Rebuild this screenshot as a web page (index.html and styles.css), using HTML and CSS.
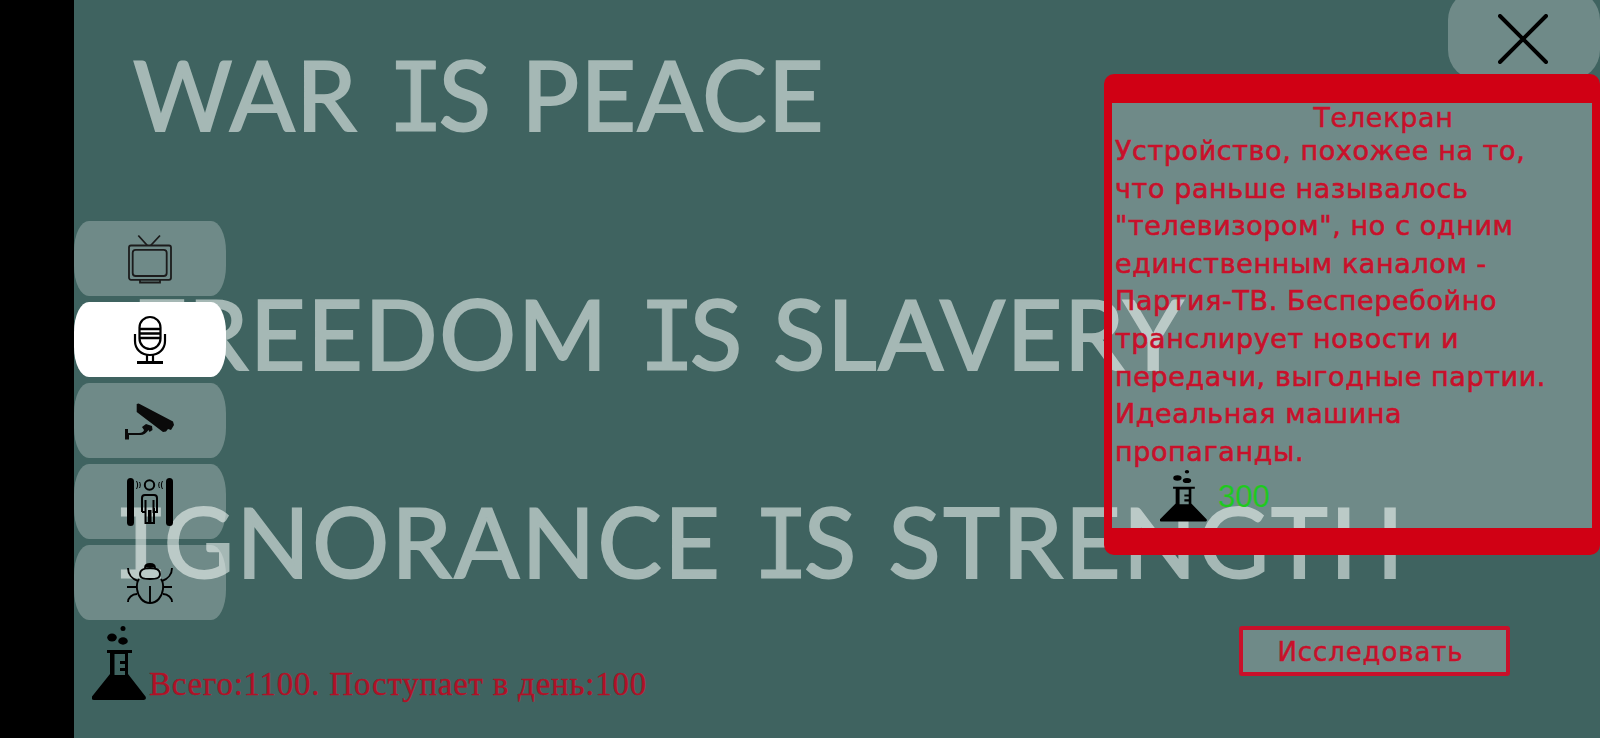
FILE: index.html
```html
<!DOCTYPE html>
<html lang="ru">
<head>
<meta charset="utf-8">
<title>Телекран</title>
<link rel="stylesheet" href="styles.css">
</head>
<body>
<div class="app">
  <div class="bar"></div>
  <main class="main">
    <div class="slogans">
      <h1 class="slogan slogan-war">WAR <span class="i">I</span>S PEACE</h1>
      <h1 class="slogan slogan-freedom">FREEDOM <span class="i">I</span>S SLAVERY</h1>
      <h1 class="slogan slogan-ignorance"><span class="i">I</span>GNORANCE <span class="i">I</span>S STRENGTH</h1>
    </div>
    <footer class="footer">
      <div class="status">
        <svg class="flask flask-big" viewBox="0 0 54 76"><use href="#flask"/></svg>
        <span class="status-text">Всего:1100. Поступает в день:100</span>
      </div>
      <button class="research">Исследовать</button>
    </footer>

    <nav class="nav">
      <button class="nav-btn">
        <svg class="nav-icon" viewBox="0 0 48 48" fill="none" stroke="#1c1c1c" stroke-width="1.8">
          <path d="M12.3.5l9 10M34 .5l-9.300 10"/>
          <rect x="3" y="10.500" width="42" height="34.300" rx="2"/>
          <rect x="6.700" y="14.800" width="34" height="26.200" rx="3"/>
          <path d="M14 45v2.500h20V45"/>
        </svg>
      </button>
      <button class="nav-btn is-active">
        <svg class="nav-icon" viewBox="0 0 48 48" fill="none" stroke="#000" stroke-width="2.200">
          <rect x="13.500" y="1" width="21" height="32" rx="10.500"/>
          <path d="M14 13h20M14 17.500h20M14 22h20" stroke-width="2.500"/>
          <path d="M9 18v7c0 8 6 14 15 14s15-6 15-14v-7"/>
          <path d="M21 39v7M27 39v7"/>
          <path d="M11 46.500h26" stroke-width="3"/>
        </svg>
      </button>
      <button class="nav-btn">
        <svg class="nav-icon" viewBox="0 0 48 48" fill="#0a0a0a">
          <path d="M10.700 7l2-.5L47 24.500l1 3.500-3 5-3-1-2 2.500-3 .5L10.700 15z"/>
          <path d="M20 27l6 2 .5 4-3 2-1-2c-2 3-5 5-8 5H3v4.500H-1V32h3v4h11c3 0 5-2 5-3l-2-3z"/>
        </svg>
      </button>
      <button class="nav-btn">
        <svg class="nav-icon" viewBox="0 0 48 48" fill="none" stroke="#000" stroke-width="2">
          <rect x="1" y="0" width="7" height="48" rx="3.500" fill="#000" stroke="none"/>
          <rect x="40" y="0" width="7" height="48" rx="3.500" fill="#000" stroke="none"/>
          <circle cx="23.500" cy="7" r="4.700"/>
          <path d="M16 34V20a3 3 0 0 1 3-3h9a3 3 0 0 1 3 3v14h-3.500V22M19.500 22v12H16M19.500 30v15h3.500V33h1.500v12H28V30"/>
          <path d="M10.500 3c1.500 2.500 1.500 5.500 0 8M13.500 4c1 1.500 1 4.500 0 6M36.500 3c-1.500 2.500-1.500 5.500 0 8M33.500 4c-1 1.500-1 4.500 0 6" stroke-width="1"/>
        </svg>
      </button>
      <button class="nav-btn">
        <svg class="nav-icon" viewBox="0 0 48 48" fill="none" stroke="#000" stroke-width="1.900">
          <path d="M14 15c0-4 4-6 10-6s10 2 10 6-3 5-10 5-10-1-10-5z"/>
          <path d="M19 9c0-3 2-4 5-4s5 1 5 4M19 7h10"/>
          <path d="M13 20c-2 3-2.500 6-2 10 1 8 6 14 13 14s12-6 13-14c.5-4 0-7-2-10"/>
          <path d="M24 27v17M2 9c0 6 4 11 10 13M46 9c0 6-4 11-10 13M1 28h10M37 28h9M2 43c0-4 4-8 9-8M46 43c0-4-4-8-9-8"/>
        </svg>
      </button>
    </nav>

    <button class="close" aria-label="Закрыть">
      <svg class="close-icon" viewBox="0 0 50 50" fill="none" stroke="#000" stroke-width="4" stroke-linecap="round"><path d="M2 2l46 46M48 2L2 48"/></svg>
    </button>

    <section class="panel">
      <h2 class="panel-title">Телекран</h2>
      <p class="panel-text">Устройство, похожее на то, что раньше называлось "телевизором", но с одним единственным каналом - Партия-ТВ. Бесперебойно транслирует новости и передачи, выгодные партии. Идеальная машина пропаганды.</p>
      <div class="cost">
        <svg class="flask flask-small" viewBox="0 0 54 76" preserveAspectRatio="none"><use href="#flask"/></svg>
        <span class="cost-value">300</span>
      </div>
    </section>
  </main>
</div>

<svg class="defs" aria-hidden="true">
  <symbol id="flask" viewBox="0 0 54 76" preserveAspectRatio="none">
    <circle cx="31" cy="2.500" r="2.500"/>
    <ellipse cx="20" cy="11.500" rx="4.800" ry="4"/>
    <ellipse cx="31" cy="15" rx="4.800" ry="3.700"/>
    <path fill-rule="evenodd" d="M15 24h25v3h-4v21l17.500 22.500c1 2 0 3.500-2 3.500H2c-2 0-3-1.500-2-3.500L18 48V27h-3zM22.500 28v21h10.500v-4h-5v-3h5v-4h-5v-3h5V28z"/>
  </symbol>
</svg>
</body>
</html>
```

FILE: styles.css
```css
* { box-sizing: border-box; }

html, body {
  margin: 0;
  height: 100%;
  overflow: hidden;
}

button {
  margin: 0;
  padding: 0;
  font: inherit;
  cursor: pointer;
}

.defs { display: none; }

.app {
  display: flex;
  width: 1600px;
  height: 738px;
  background: #000;
}

.bar {
  flex: 0 0 74px;
}

.main {
  position: relative;
  flex: 1;
  display: flex;
  flex-direction: column;
  background: #3f6360;
  font-family: "DejaVu Sans", sans-serif;
}

.slogans {
  display: flex;
  flex-direction: column;
}

.slogan {
  margin: 0;
  font-family: "Lato", sans-serif;
  font-weight: 400;
  font-size: 96px;
  line-height: 76px;
  letter-spacing: 1.5px;
  word-spacing: 3px;
  color: #a5b8b5;
  white-space: nowrap;
  -webkit-text-stroke: 2px #a5b8b5;
}

.slogan .i {
  font-family: "DejaVu Sans Mono", monospace;
  font-size: 96px;
  letter-spacing: -6px;
  -webkit-text-stroke: 1px #a5b8b5;
}

.slogan-war { margin: 56px 0 0 59px; }
.slogan-freedom { margin: 159px 0 0 58px; letter-spacing: 1.8px; }
.slogan-ignorance { margin: 128px 0 0 38px; letter-spacing: 2.5px; }

.footer {
  position: relative;
  margin-top: auto;
  padding: 0 90px 36px 18px;
  display: flex;
  justify-content: space-between;
  align-items: flex-start;
}

.status {
  display: flex;
  align-items: flex-end;
  gap: 3px;
}

.flask { display: block; fill: #000; }
.flask-big { width: 54px; height: 76px; }
.flask-small { width: 47px; height: 53px; }

.status-text {
  font-family: "Liberation Serif", serif;
  font-size: 33px;
  line-height: 36px;
  letter-spacing: 0.75px;
  color: #b01127;
  -webkit-text-stroke: 0.3px #b01127;
  margin-bottom: 0;
}

.research {
  width: 271px;
  height: 50px;
  padding: 2px 8px 0 0;
  border: 4px solid #c9102a;
  border-radius: 3px;
  background: rgba(255, 255, 255, 0.25);
  color: #c9102a;
  font-family: "DejaVu Sans", sans-serif;
  font-size: 26px;
  letter-spacing: 0.9px;
  -webkit-text-stroke: 0.5px #c9102a;
}

.nav {
  position: absolute;
  left: 0;
  top: 221px;
  display: flex;
  flex-direction: column;
  gap: 6px;
}

.nav-btn {
  display: flex;
  align-items: center;
  justify-content: center;
  width: 152px;
  height: 75px;
  border: 0;
  border-radius: 15px / 30px;
  background: rgba(255, 255, 255, 0.25);
}

.nav-btn.is-active { background: #fff; }

.nav-icon {
  width: 48px;
  height: 48px;
  overflow: visible;
}

.close {
  position: absolute;
  top: -10px;
  right: 0;
  width: 152px;
  height: 90px;
  display: flex;
  align-items: center;
  justify-content: center;
  border: 0;
  border-radius: 30px;
  background: rgba(255, 255, 255, 0.25);
}

.close-icon {
  width: 50px;
  height: 50px;
  margin-top: 8px;
  margin-right: 2px;
}

.panel {
  position: absolute;
  top: 74px;
  right: 0;
  width: 496px;
  height: 481px;
  border: solid #d00014;
  border-width: 29px 8px 27px;
  border-radius: 10px;
  padding: 0 3px;
  background: rgba(255, 255, 255, 0.25);
  background-clip: padding-box;
  color: #c9102a;
}

.panel-title {
  margin: 0;
  padding-left: 63px;
  font-size: 27px;
  font-weight: 400;
  line-height: 29px;
  letter-spacing: 0.7px;
  text-align: center;
  -webkit-text-stroke: 0.5px #c9102a;
}

.panel-text {
  margin: 0;
  width: 440px;
  font-size: 27px;
  line-height: 37.6px;
  letter-spacing: 0.6px;
  -webkit-text-stroke: 0.6px #c9102a;
}

.cost {
  display: flex;
  align-items: flex-end;
  gap: 11px;
  padding-left: 45px;
}

.cost-value {
  font-family: "Liberation Sans", sans-serif;
  font-size: 31px;
  line-height: 36px;
  margin-bottom: 8px;
  color: #1fc81f;
}
```
